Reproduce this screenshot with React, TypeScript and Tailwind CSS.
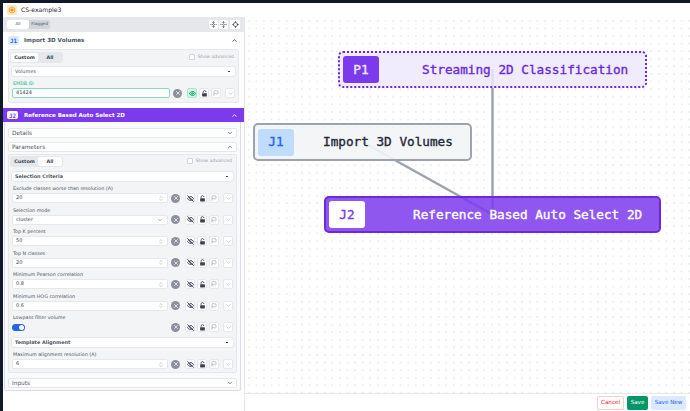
import React from 'react';
import { ChevronDown, ChevronUp, ChevronsUpDown, EyeOff, Eye, Flag, X, Locate, FoldVertical, UnfoldVertical } from 'lucide-react';

const LockIcon = () => (
  <svg viewBox="0 0 8 8" className="w-[7px] h-[7px]" fill="none">
    <path d="M2.4 3.6V2.3a1.6 1.6 0 0 1 3.2 0" stroke="currentColor" strokeWidth="0.9" />
    <rect x="1.3" y="3.6" width="5.4" height="3.8" rx="0.5" fill="currentColor" />
  </svg>
);

const Actions = ({ active = false }: { active?: boolean }) => (
  <div className="flex items-center shrink-0">
    <div className="w-[9px] h-[9px] rounded-full bg-[#8b919c] flex items-center justify-center ml-[3px] mr-[5px]">
      <X className="w-[6px] h-[6px] text-[#e5e7eb]" strokeWidth={3.5} />
    </div>
    <div className={`w-[10px] h-[10px] border rounded-[2px] mr-[2px] flex items-center justify-center ${active ? 'bg-[#d1fae5] border-[#a7e8cf] text-[#059669]' : 'bg-white border-[#e5e7eb] text-[#374151]'}`}>
      {active ? <Eye className="w-[7px] h-[7px]" strokeWidth={3} /> : <EyeOff className="w-[7px] h-[7px]" strokeWidth={3} />}
    </div>
    <div className="w-[10px] h-[10px] border border-[#e5e7eb] bg-white rounded-[2px] mr-[2px] flex items-center justify-center text-[#374151]">
      <LockIcon />
    </div>
    <div className="w-[10px] h-[10px] border border-[#e5e7eb] bg-white rounded-[2px] mr-[4px] flex items-center justify-center text-[#9ca3af]">
      <Flag className="w-[6px] h-[6px]" strokeWidth={2.5} />
    </div>
    <div className="w-[10px] h-[10px] border border-[#e5e7eb] bg-white rounded-[2px] flex items-center justify-center text-[#a3a8b1]">
      <ChevronDown className="w-[7px] h-[7px]" />
    </div>
  </div>
);

const Field = ({ label, children }: { label: string; children: React.ReactNode }) => (
  <div className="h-[21.5px] shrink-0 flex flex-col">
    <div className="h-[8px] text-[4.8px] leading-[7px] whitespace-nowrap text-[#4b5563] ml-[4px]">{label}</div>
    <div className="flex items-center ml-[3px] mr-[3px]">{children}</div>
  </div>
);

const NumberField = ({ label, value }: { label: string; value: string }) => (
  <Field label={label}>
    <div className="flex-1 h-[10px] bg-white rounded-[2px] border border-[#e5e7eb] flex items-center justify-between pl-[3px] pr-[3px] text-[5px] text-[#374151]">
      <span>{value}</span>
      <ChevronsUpDown className="w-[6px] h-[7px] text-[#9ca3af]" />
    </div>
    <Actions />
  </Field>
);

const SectionBar = ({ title, bold = true }: { title: string; bold?: boolean }) => (
  <div className={`mx-[2px] h-[11px] shrink-0 bg-white border border-[#e5e7eb] rounded-[3px] flex items-center justify-between pl-[3px] pr-[5px] text-[4.9px] text-[#4b5563] ${bold ? 'font-bold' : ''}`}>
    <span>{title}</span>
    <span className="w-[2px] h-[1px] bg-[#374151]"></span>
  </div>
);

const ModeTabs = ({ custom }: { custom: boolean }) => (
  <div className="flex items-center justify-between ml-[1px] mr-[4px] shrink-0">
    <div className="flex bg-[#e5e7eb] rounded-[3px] p-[1px] h-[11px] w-[53px] text-[4.8px] font-bold text-[#374151]">
      <div className={`w-[27px] flex items-center justify-center rounded-[2px] ${custom ? 'bg-white' : ''}`}>Custom</div>
      <div className={`flex-1 flex items-center justify-center rounded-[2px] ${custom ? '' : 'bg-white'}`}>All</div>
    </div>
    <div className="flex items-center gap-[3px] text-[4.6px] text-[#9ca3af]">
      <span className="w-[6px] h-[6px] bg-white border border-[#d1d5db] rounded-[1px]"></span>
      <span>Show advanced</span>
    </div>
  </div>
);

const Accordion = ({ title, open = false }: { title: string; open?: boolean }) => (
  <div className="h-[10px] shrink-0 bg-white border border-[#e5e7eb] rounded-[2px] flex items-center justify-between pl-[3px] pr-[3px] text-[5.8px] text-[#4b5563]">
    <span>{title}</span>
    {open ? <ChevronUp className="w-[6px] h-[6px]" strokeWidth={3} /> : <ChevronDown className="w-[6px] h-[6px]" strokeWidth={3} />}
  </div>
);

const Node = ({ badge, title, badgeClass, boxClass, textClass, titleClass }: {
  badge: string; title: string; badgeClass: string; boxClass: string; textClass: string; titleClass: string;
}) => (
  <div className={`rounded-[5px] flex items-center pl-[3px] font-['DejaVu_Sans_Mono',monospace] text-[12.7px] [-webkit-text-stroke:0.35px_currentColor] ${boxClass}`}>
    <div className={`w-[36px] h-[27px] rounded-[3px] flex items-center justify-center shrink-0 ${badgeClass}`}>{badge}</div>
    <div className={`whitespace-nowrap ${titleClass} ${textClass}`}>{title}</div>
  </div>
);

export default function App() {
  return (
    <div className="w-[690px] h-[411px] overflow-hidden bg-white flex font-['DejaVu_Sans',sans-serif]">
      <div className="w-[3px] h-full bg-[#111827] shrink-0"></div>
      <div className="flex-1 flex flex-col min-w-0">
        <div className="h-[3px] bg-[#111827] shrink-0"></div>
        <div className="h-[14px] bg-white flex items-center pl-[4px] gap-[4px] shrink-0">
          <div className="w-[10px] h-[10px] rounded-[2px] bg-[#fde9c4] flex items-center justify-center text-[#e8930c]">
            <svg viewBox="0 0 10 10" className="w-[8px] h-[8px]" fill="none" stroke="currentColor" strokeWidth="1">
              <path d="M5 1l3.4 2v4L5 9 1.6 7V3z" />
              <path d="M5 3.4l1.4.8v1.6L5 6.6l-1.4-.8V4.2z" fill="currentColor" />
            </svg>
          </div>
          <span className="text-[6.1px] text-[#1f2937]">CS-example3</span>
        </div>
        <div className="flex-1 flex min-h-0">
          {/* sidebar */}
          <div className="w-[242px] shrink-0 bg-white border-r border-[#e5e7eb] flex flex-col">
            <div className="h-[15px] bg-[#e5e7eb] flex items-center justify-between pl-[4px] pr-[4px] shrink-0">
              <div className="flex bg-[#d1d5db] rounded-[2px] h-[9px] text-[4.2px] text-[#4b5563]">
                <div className="w-[22px] bg-white rounded-[2px] flex items-center justify-center">All</div>
                <div className="w-[21px] flex items-center justify-center">Flagged</div>
              </div>
              <div className="flex gap-[1px]">
                <div className="w-[9px] h-[9px] bg-white rounded-[1px] flex items-center justify-center text-[#374151]"><FoldVertical className="w-[7px] h-[7px]" /></div>
                <div className="w-[9px] h-[9px] bg-white rounded-[1px] flex items-center justify-center text-[#374151]"><UnfoldVertical className="w-[7px] h-[7px]" /></div>
                <div className="w-[10px] h-[9px] bg-white rounded-[1px] flex items-center justify-center text-[#374151] ml-[1px]"><Locate className="w-[7px] h-[7px]" strokeWidth={2.5} /></div>
              </div>
            </div>
            {/* J1 */}
            <div className="h-[17px] flex items-center pl-[5px] pr-[6px] shrink-0">
              <div className="w-[11px] h-[9px] rounded-[2px] bg-[#dbeafe] text-[#2563eb] text-[6px] font-bold flex items-center justify-center font-['DejaVu_Sans_Mono',monospace]">J1</div>
              <span className="ml-[5px] text-[5.6px] font-bold text-[#4b5563] flex-1">Import 3D Volumes</span>
              <ChevronUp className="w-[7px] h-[7px] text-[#374151]" strokeWidth={3} />
            </div>
            <div className="ml-[5px] mr-[5px] h-[54px] bg-[#f3f4f6] border border-[#e5e7eb] rounded-[2px] mb-[5px] pt-[2px] flex flex-col shrink-0 gap-[3px]">
              <ModeTabs custom={true} />
              <SectionBar title="Volumes" bold={false} />
              <div className="flex flex-col">
                <div className="h-[8px] text-[4.8px] leading-[7px] text-[#10b981] ml-[4px]">EMDB ID</div>
                <div className="flex items-center ml-[3px] mr-[3px]">
                  <div className="flex-1 h-[10px] bg-white border border-[#86dcc0] rounded-[2px] flex items-center pl-[3px] text-[5px] text-[#374151]">41424</div>
                  <Actions active={true} />
                </div>
              </div>
            </div>
            {/* J2 */}
            <div className="h-[14px] bg-[#7c3aed] flex items-center pl-[4px] pr-[6px] shrink-0">
              <div className="w-[11px] h-[8px] rounded-[2px] bg-white text-[#7c3aed] text-[6px] font-bold flex items-center justify-center font-['DejaVu_Sans_Mono',monospace]">J2</div>
              <span className="ml-[6px] text-[5.55px] font-bold text-white flex-1">Reference Based Auto Select 2D</span>
              <ChevronUp className="w-[7px] h-[7px] text-white" strokeWidth={3} />
            </div>
            <div className="ml-[1px] mr-[3px] h-[269px] border border-[#ddd6fe] border-t-0 rounded-b-[2px] bg-[#f9fafb] px-[3px] pt-[6px] flex flex-col shrink-0">
              <Accordion title="Details" />
              <div className="h-[4px] shrink-0"></div>
              <Accordion title="Parameters" open />
              <div className="h-[2px] shrink-0"></div>
              <div className="h-[219px] shrink-0 bg-[#f3f4f6] border border-[#e5e7eb] rounded-[2px] pt-[1px] flex flex-col">
                <ModeTabs custom={false} />
                <div className="h-[4px] shrink-0"></div>
                <SectionBar title="Selection Criteria" />
                <div className="h-[3px] shrink-0"></div>
                <NumberField label="Exclude classes worse than resolution (A)" value="20" />
                <Field label="Selection mode">
                  <div className="flex-1 h-[10px] bg-white rounded-[2px] border border-[#e5e7eb] flex items-center justify-between pl-[3px] pr-[4px] text-[5px] text-[#374151]">
                    <span>cluster</span>
                    <ChevronDown className="w-[6px] h-[6px] text-[#4b5563]" />
                  </div>
                  <Actions />
                </Field>
                <NumberField label="Top K percent" value="50" />
                <NumberField label="Top N classes" value="20" />
                <NumberField label="Minimum Pearson correlation" value="0.8" />
                <NumberField label="Minimum HOG correlation" value="0.6" />
                <Field label="Lowpass filter volume">
                  <div className="flex-1 h-[10px] flex items-center">
                    <div className="w-[13px] h-[7px] rounded-full bg-[#2563eb] flex items-center justify-end pr-[1px]">
                      <span className="w-[5px] h-[5px] rounded-full bg-white"></span>
                    </div>
                  </div>
                  <Actions />
                </Field>
                <div className="h-[1.5px] shrink-0"></div>
                <SectionBar title="Template Alignment" />
                <div className="h-[3px] shrink-0"></div>
                <NumberField label="Maximum alignment resolution (A)" value="6" />
              </div>
              <div className="h-[5px] shrink-0"></div>
              <Accordion title="Inputs" />
            </div>
          </div>
          {/* canvas */}
          <div className="flex-1 flex flex-col min-w-0">
            <div className="flex-1 relative bg-white bg-[radial-gradient(#eceef1_0.7px,transparent_0.9px)] bg-[length:7.6px_7.6px]">
              <svg className="absolute inset-0 w-full h-full" viewBox="0 0 445 376" fill="none">
                <path d="M247.5 52V197.5" stroke="#9ca3af" strokeWidth="2.5" />
                <path d="M117.5 125L247.5 197.5" stroke="#9ca3af" strokeWidth="2.5" />
              </svg>
              <div className="absolute left-[93px] top-[34px] w-[309px] h-[37px]">
                <Node badge="P1" title="Streaming 2D Classification" boxClass="h-full bg-[#ede9fe]/85 border-2 border-dotted border-[#6d28d9]" badgeClass="bg-[#7c3aed] text-[#ede9fe]" textClass="text-[#6d28d9]" titleClass="ml-[43px]" />
              </div>
              <div className="absolute left-[8px] top-[106px] w-[219px] h-[38px]">
                <Node badge="J1" title="Import 3D Volumes" boxClass="h-full bg-[#f3f4f6]/90 border-2 border-[#9ca3af]" badgeClass="bg-[#bfdbfe] text-[#2563eb]" textClass="text-[#1f2937]" titleClass="ml-[29px]" />
              </div>
              <div className="absolute left-[79px] top-[179px] w-[337px] h-[37px]">
                <Node badge="J2" title="Reference Based Auto Select 2D" boxClass="h-full bg-[#7c3aed]/85 border-2 border-[#6d28d9]" badgeClass="bg-white text-[#7c3aed]" textClass="text-white" titleClass="ml-[48px]" />
              </div>
            </div>
            <div className="h-[18px] border-t border-[#e5e7eb] bg-white flex items-center justify-end gap-[3px] pr-[4px] shrink-0 text-[5.6px]">
              <div className="h-[14px] w-[27px] border border-[#fecaca] rounded-[2px] text-[#dc2626] flex items-center justify-center">Cancel</div>
              <div className="h-[14px] w-[21px] bg-[#059669] rounded-[2px] text-white flex items-center justify-center">Save</div>
              <div className="h-[14px] w-[35px] bg-[#dbeafe] rounded-[2px] text-[#2563eb] flex items-center justify-center">Save New</div>
            </div>
          </div>
        </div>
      </div>
    </div>
  );
}
